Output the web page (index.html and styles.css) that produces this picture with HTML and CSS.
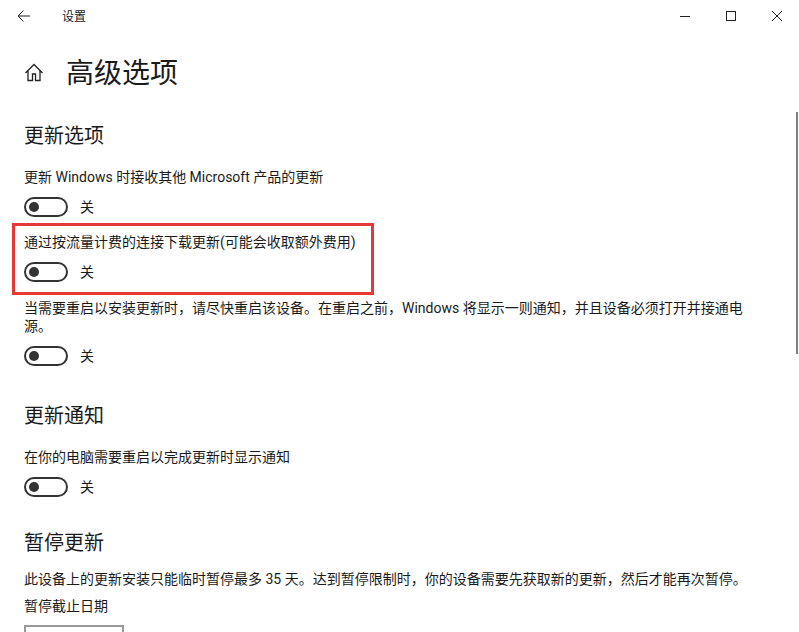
FILE: index.html
```html
<!DOCTYPE html>
<html lang="zh-CN">
<head>
    <meta charset="UTF-8">
    <meta name="viewport" content="width=device-width, initial-scale=1.0">
    <title>设置</title>
    <link rel="stylesheet" href="styles.css">
</head>
<body>
    <div class="titlebar">
        <svg class="back-icon" width="16" height="16" viewBox="0 0 16 16"><path d="M14 8H2.500M7.500 2.500 2 8l5.500 5.500" fill="none" stroke="#222" stroke-width="1"/></svg>
        <span class="app-name">设置</span>
        <div class="window-buttons">
            <svg width="12" height="12" viewBox="0 0 12 12"><path d="M1 6.500H11" stroke="#222" fill="none"/></svg>
            <svg width="12" height="12" viewBox="0 0 12 12"><rect x="1.500" y="1.500" width="9" height="9" stroke="#222" fill="none"/></svg>
            <svg width="12" height="12" viewBox="0 0 12 12"><path d="M1 1 11 11M11 1 1 11" stroke="#222" fill="none"/></svg>
        </div>
    </div>

    <div class="page-head">
        <svg class="home-icon" width="20" height="20" viewBox="0 0 20 20"><path d="M1.500 11 10 2.500l8.500 8.500M4 9v9.500h4.500V12h3v6.500H16V9" fill="none" stroke="#222" stroke-width="1.300"/></svg>
        <h1>高级选项</h1>
    </div>

    <main class="content">
        <h2 class="first">更新选项</h2>
        <div class="setting">
            <p>更新 Windows 时接收其他 Microsoft 产品的更新</p>
            <div class="toggle-row"><span class="toggle"></span><span>关</span></div>
        </div>
        <div class="setting">
            <p>通过按流量计费的连接下载更新(可能会收取额外费用)</p>
            <div class="toggle-row"><span class="toggle"></span><span>关</span></div>
        </div>
        <div class="setting wrap">
            <p>当需要重启以安装更新时，请尽快重启该设备。在重启之前，Windows 将显示一则通知，并且设备必须打开并接通电源。</p>
            <div class="toggle-row"><span class="toggle"></span><span>关</span></div>
        </div>

        <h2>更新通知</h2>
        <div class="setting">
            <p>在你的电脑需要重启以完成更新时显示通知</p>
            <div class="toggle-row"><span class="toggle"></span><span>关</span></div>
        </div>

        <h2 class="pause">暂停更新</h2>
        <p class="pause-text">此设备上的更新安装只能临时暂停最多 35 天。达到暂停限制时，你的设备需要先获取新的更新，然后才能再次暂停。</p>
        <p class="date-label">暂停截止日期</p>
        <div class="date-select"></div>
    </main>

    <div class="highlight"></div>
    <div class="scroll-thumb"></div>
</body>
</html>
```

FILE: styles.css
```css
html, body {
    height: 100%;
    margin: 0;
    overflow: hidden;
}
body {
    position: relative;
    background: #fff;
    color: #1a1a1a;
    font-family: Roboto, "Noto Sans CJK SC", sans-serif;
    font-size: 14px;
}
p {
    margin: 0;
}
.titlebar {
    display: flex;
    align-items: center;
    height: 32px;
    padding-left: 16px;
}
.back-icon {
    margin-right: 30px;
}
.app-name {
    margin-bottom: 2px;
    font-size: 12px;
}
.window-buttons {
    display: flex;
    gap: 34px;
    margin-left: auto;
    margin-right: 16px;
}
.page-head {
    display: flex;
    align-items: center;
    height: 48px;
    margin-top: 16px;
    padding-left: 24px;
}
.home-icon {
    margin-right: 22px;
}
h1 {
    margin: 4px 0 0;
    font-size: 28px;
    font-weight: 400;
    line-height: 48px;
}
.content {
    padding: 0 44px 0 24px;
}
h2 {
    margin: 0;
    height: 28px;
    padding-top: 36px;
    font-size: 20px;
    font-weight: 400;
    line-height: 28px;
}
h2.first {
    padding-top: 26px;
}
h2.pause {
    padding-top: 32px;
}
.setting {
    margin-top: 18px;
    line-height: 18px;
}
.setting + .setting {
    margin-top: 0;
    padding-top: 16px;
}
.setting.wrap {
    padding-top: 17px;
}
.toggle-row {
    display: flex;
    align-items: center;
    gap: 12px;
    height: 20px;
    margin-top: 11px;
}
.toggle {
    position: relative;
    box-sizing: border-box;
    width: 44px;
    height: 20px;
    border: 2px solid #333;
    border-radius: 10px;
}
.toggle::after {
    content: "";
    position: absolute;
    left: 3px;
    top: 3px;
    width: 10px;
    height: 10px;
    border-radius: 50%;
    background: #333;
}
.pause-text {
    margin-top: 12px;
    line-height: 20px;
}
.date-label {
    margin-top: 7px;
    line-height: 20px;
}
.date-select {
    box-sizing: border-box;
    width: 100px;
    height: 32px;
    margin-top: 9px;
    border: 2px solid #999;
}
.highlight {
    position: absolute;
    left: 12px;
    top: 223px;
    width: 356px;
    height: 66px;
    border: 3px solid #e53935;
}
.scroll-thumb {
    position: absolute;
    right: 1px;
    top: 112px;
    width: 2px;
    height: 242px;
    background: #808080;
}
```
